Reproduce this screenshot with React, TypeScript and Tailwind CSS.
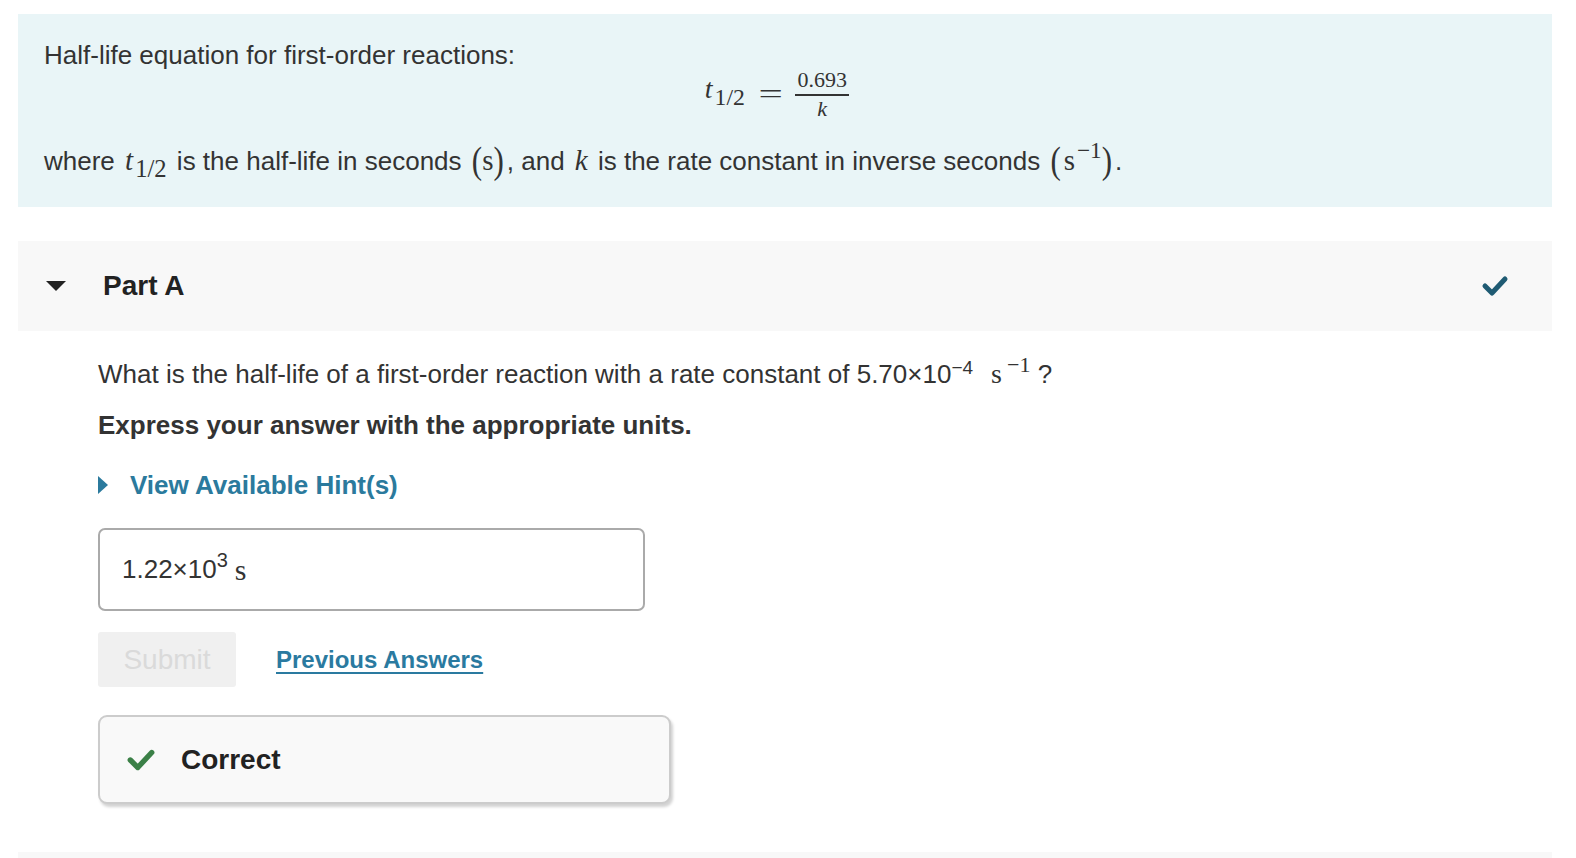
import * as React from "react";

const sans = { fontFamily: '"Liberation Sans", Arial, Helvetica, sans-serif' };
const serif = { fontFamily: '"Liberation Serif", "Times New Roman", serif' };

function Check({ className }: { className?: string }) {
  return (
    <svg viewBox="0 0 28 22" className={className} fill="none">
      <polyline
        points="4,11 11,18 24,4"
        stroke="currentColor"
        strokeWidth="5"
        strokeLinecap="round"
        strokeLinejoin="round"
      />
    </svg>
  );
}

function Half() {
  return (
    <span style={serif} className="whitespace-nowrap leading-none">
      <i>t</i>
      <span className="relative top-[7px] ml-[2px] text-[0.85em]">1/2</span>
    </span>
  );
}

function Paren({ children }: { children: React.ReactNode }) {
  return <span className="relative top-[1px] inline-block scale-y-[1.2] text-[31px] leading-none">{children}</span>;
}

export default function App() {
  return (
    <div className="h-[858px] overflow-hidden bg-white pt-[14px] pl-[18px] text-[#333]" style={sans}>
      <div className="w-[1534px]">
        {/* intro box */}
        <div className="h-[193px] bg-[#e9f5f7] pl-[26px] pt-[26px] text-[26px]">
          <div className="leading-[30px]">Half-life equation for first-order reactions:</div>
          <div className="flex justify-center pr-[42px]">
            <div className="flex items-center text-[28px]" style={serif}>
              <span className="mt-[-12px]">
                <Half />
              </span>
              <span className="ml-[18px] inline-block scale-x-[1.6] text-[27px]">=</span>
              <span className="ml-[17px] flex flex-col items-center text-[22px] leading-[20px]">
                <span className="px-[1px] pb-[4px]">0.693</span>
                <span className="h-[2px] w-[54px] bg-[#333]" />
                <span className="pt-[3px] italic">k</span>
              </span>
            </div>
          </div>
          <div className="mt-[25px] leading-[30px]">
            where{" "}
            <span className="mx-[3px] text-[29px]">
              <Half />
            </span>{" "}
            is the half-life in seconds{" "}
            <span style={serif} className="mx-[3px] text-[29px]">
              <Paren>(</Paren>s<Paren>)</Paren>
            </span>
            , and <i style={serif} className="mx-[3px] text-[29px] leading-none">k</i> is the rate constant in inverse
            seconds{" "}
            <span style={serif} className="mx-[3px] text-[29px] leading-none">
              <Paren>(</Paren>
              <span className="ml-[3px]">s</span>
              <sup className="ml-[2px] text-[0.8em]">−1</sup>
              <Paren>)</Paren>
            </span>
            .
          </div>
        </div>

        {/* Part A header */}
        <div className="mt-[34px] flex h-[90px] items-center bg-[#f8f8f8]">
          <div className="ml-[28px] h-0 w-0 border-x-[10px] border-t-[10px] border-x-transparent border-t-[#222]" />
          <div className="ml-[37px] text-[28px] font-bold text-[#222]">Part A</div>
          <div className="flex-1" />
          <Check className="mr-[43px] h-[22px] w-[28px] text-[#1f5b73]" />
        </div>

        {/* Part A content */}
        <div className="pl-[80px]">
          <div className="mt-[27px] text-[26px] leading-[32px]">
            What is the half-life of a first-order reaction with a rate constant of 5.70×10
            <sup className="text-[19px]">−4</sup>
            <span style={serif} className="ml-[18px] text-[28px]">
              s<sup className="ml-[5px] text-[22px]">−1</sup>
            </span>{" "}
            ?
          </div>
          <div className="mt-[19px] text-[26px] font-bold leading-[32px]">
            Express your answer with the appropriate units.
          </div>

          <div className="mt-[28px] flex items-center">
            <div className="h-0 w-0 border-y-[9px] border-l-[10px] border-y-transparent border-l-[#2b7a9d]" />
            <span className="ml-[22px] text-[26px] font-bold leading-[32px] text-[#2b7a9d]">
              View Available Hint(s)
            </span>
          </div>

          <div className="mt-[27px] flex h-[83px] w-[547px] items-center rounded-[7px] border-2 border-[#aaa] pl-[22px] text-[26px]">
            1.22×10<sup className="text-[20px]">3</sup>
            <span style={serif} className="ml-[7px] text-[30px]">
              s
            </span>
          </div>

          <div className="mt-[21px] flex items-center">
            <div className="flex h-[55px] w-[138px] items-center justify-center rounded-[3px] bg-[#f0f0f0] text-[28px] text-[#dadada]">
              Submit
            </div>
            <span className="ml-[40px] text-[24px] font-bold text-[#2a7aa0] underline underline-offset-[4px]">
              Previous Answers
            </span>
          </div>

          <div className="mt-[28px] flex h-[89px] w-[573px] items-center rounded-[9px] border-2 border-[#ccc] bg-[#f9f9f9] shadow-[2px_3px_3px_rgba(0,0,0,0.18)]">
            <Check className="ml-[26px] h-[24px] w-[30px] text-[#3b8047]" />
            <span className="ml-[25px] text-[28px] font-bold text-[#222]">Correct</span>
          </div>
        </div>

        <div className="mt-[48px] h-[20px] bg-[#f8f8f8]" />
      </div>
    </div>
  );
}
